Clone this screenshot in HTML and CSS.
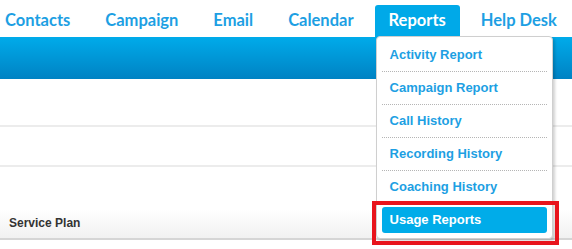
FILE: index.html
```html
<!DOCTYPE html>
<html>
<head>
    <meta charset="utf-8">
    <title>Reports</title>
    <link rel="stylesheet" href="styles.css">
</head>
<body>
    <div class="topnav">
        <ul class="menu">
            <li><a href="#">Contacts</a></li>
            <li><a href="#">Campaign</a></li>
            <li><a href="#">Email</a></li>
            <li><a href="#">Calendar</a></li>
            <li class="active">
                <a href="#">Reports</a>
                <ul class="dropdown">
                    <li><a href="#">Activity Report</a></li>
                    <li><a href="#">Campaign Report</a></li>
                    <li><a href="#">Call History</a></li>
                    <li><a href="#">Recording History</a></li>
                    <li><a href="#">Coaching History</a></li>
                    <li class="current"><a href="#">Usage Reports</a></li>
                </ul>
                <div class="highlight"></div>
            </li>
            <li><a href="#">Help Desk</a></li>
        </ul>
    </div>
    <div class="bluebar"></div>

    <div class="row row1"></div>
    <div class="row row2"></div>
    <div class="row plan">
        <span>Service Plan</span>
    </div>
</body>
</html>
```

FILE: styles.css
```css
body {
    margin: 0;
    font-family: "Liberation Sans", Arial, sans-serif;
    background-color: #fff;
    width: 572px;
    height: 249px;
    overflow: hidden;
}

ul {
    list-style: none;
    margin: 0;
    padding: 0;
}

a {
    text-decoration: none;
}

.topnav {
    height: 37px;
    background-color: #fff;
}

.menu {
    display: flex;
    gap: 7px;
    height: 37px;
    padding-top: 5px;
    box-sizing: border-box;
}

.menu > li {
    position: relative;
    flex-shrink: 0;
}

.menu > li > a {
    display: block;
    height: 32px;
    line-height: 31px;
    padding: 0 14px;
    white-space: nowrap;
    font-family: Lato, "Open Sans", sans-serif;
    font-weight: bold;
    font-size: 16.5px;
    color: #1d9fe3;
}

.menu > li:first-child > a {
    padding-left: 5px;
}

.menu > li.active > a {
    background-color: #00a9e8;
    color: #fff;
    border-radius: 3px 3px 0 0;
}

/* dropdown of Reports */
.dropdown {
    position: absolute;
    top: 31px;
    left: 1px;
    width: 165px;
    padding: 2px 5px 2px 5px;
    background-color: #fff;
    border: 1px solid #cfcfcf;
    border-radius: 4px;
    box-shadow: 2px 2px 3px rgba(0, 0, 0, 0.18);
    z-index: 2;
}

.dropdown li {
    border-bottom: 1px dotted #b5b5b5;
}

.dropdown li:last-child {
    border-bottom: none;
}

.dropdown a {
    display: block;
    height: 26px;
    line-height: 26px;
    margin: 3px 0;
    padding-left: 8px;
    border-radius: 3px;
    font-size: 13px;
    font-weight: bold;
    color: #1d9fe3;
}

.dropdown li.current a {
    background-color: #00ace9;
    color: #fff;
}

/* red marker round Usage Reports */
.highlight {
    position: absolute;
    top: 196px;
    left: -3px;
    width: 179px;
    height: 36px;
    border: 4px solid #e8141c;
    z-index: 3;
}

.bluebar {
    height: 42px;
    background: linear-gradient(#00abea, #0082c3);
}

.row {
    border-bottom: 2px solid #ececec;
}

.row1 {
    height: 46px;
}

.row2 {
    height: 38px;
}

.plan {
    height: 73px;
    display: flex;
    align-items: flex-end;
    padding-left: 9px;
    box-sizing: border-box;
    background: linear-gradient(#fff 60%, #f1f1f1);
    border-bottom: 2px solid #d5d5d5;
}

.plan span {
    font-size: 12px;
    font-weight: bold;
    color: #333;
    line-height: 14px;
    margin-bottom: 8px;
}
```
